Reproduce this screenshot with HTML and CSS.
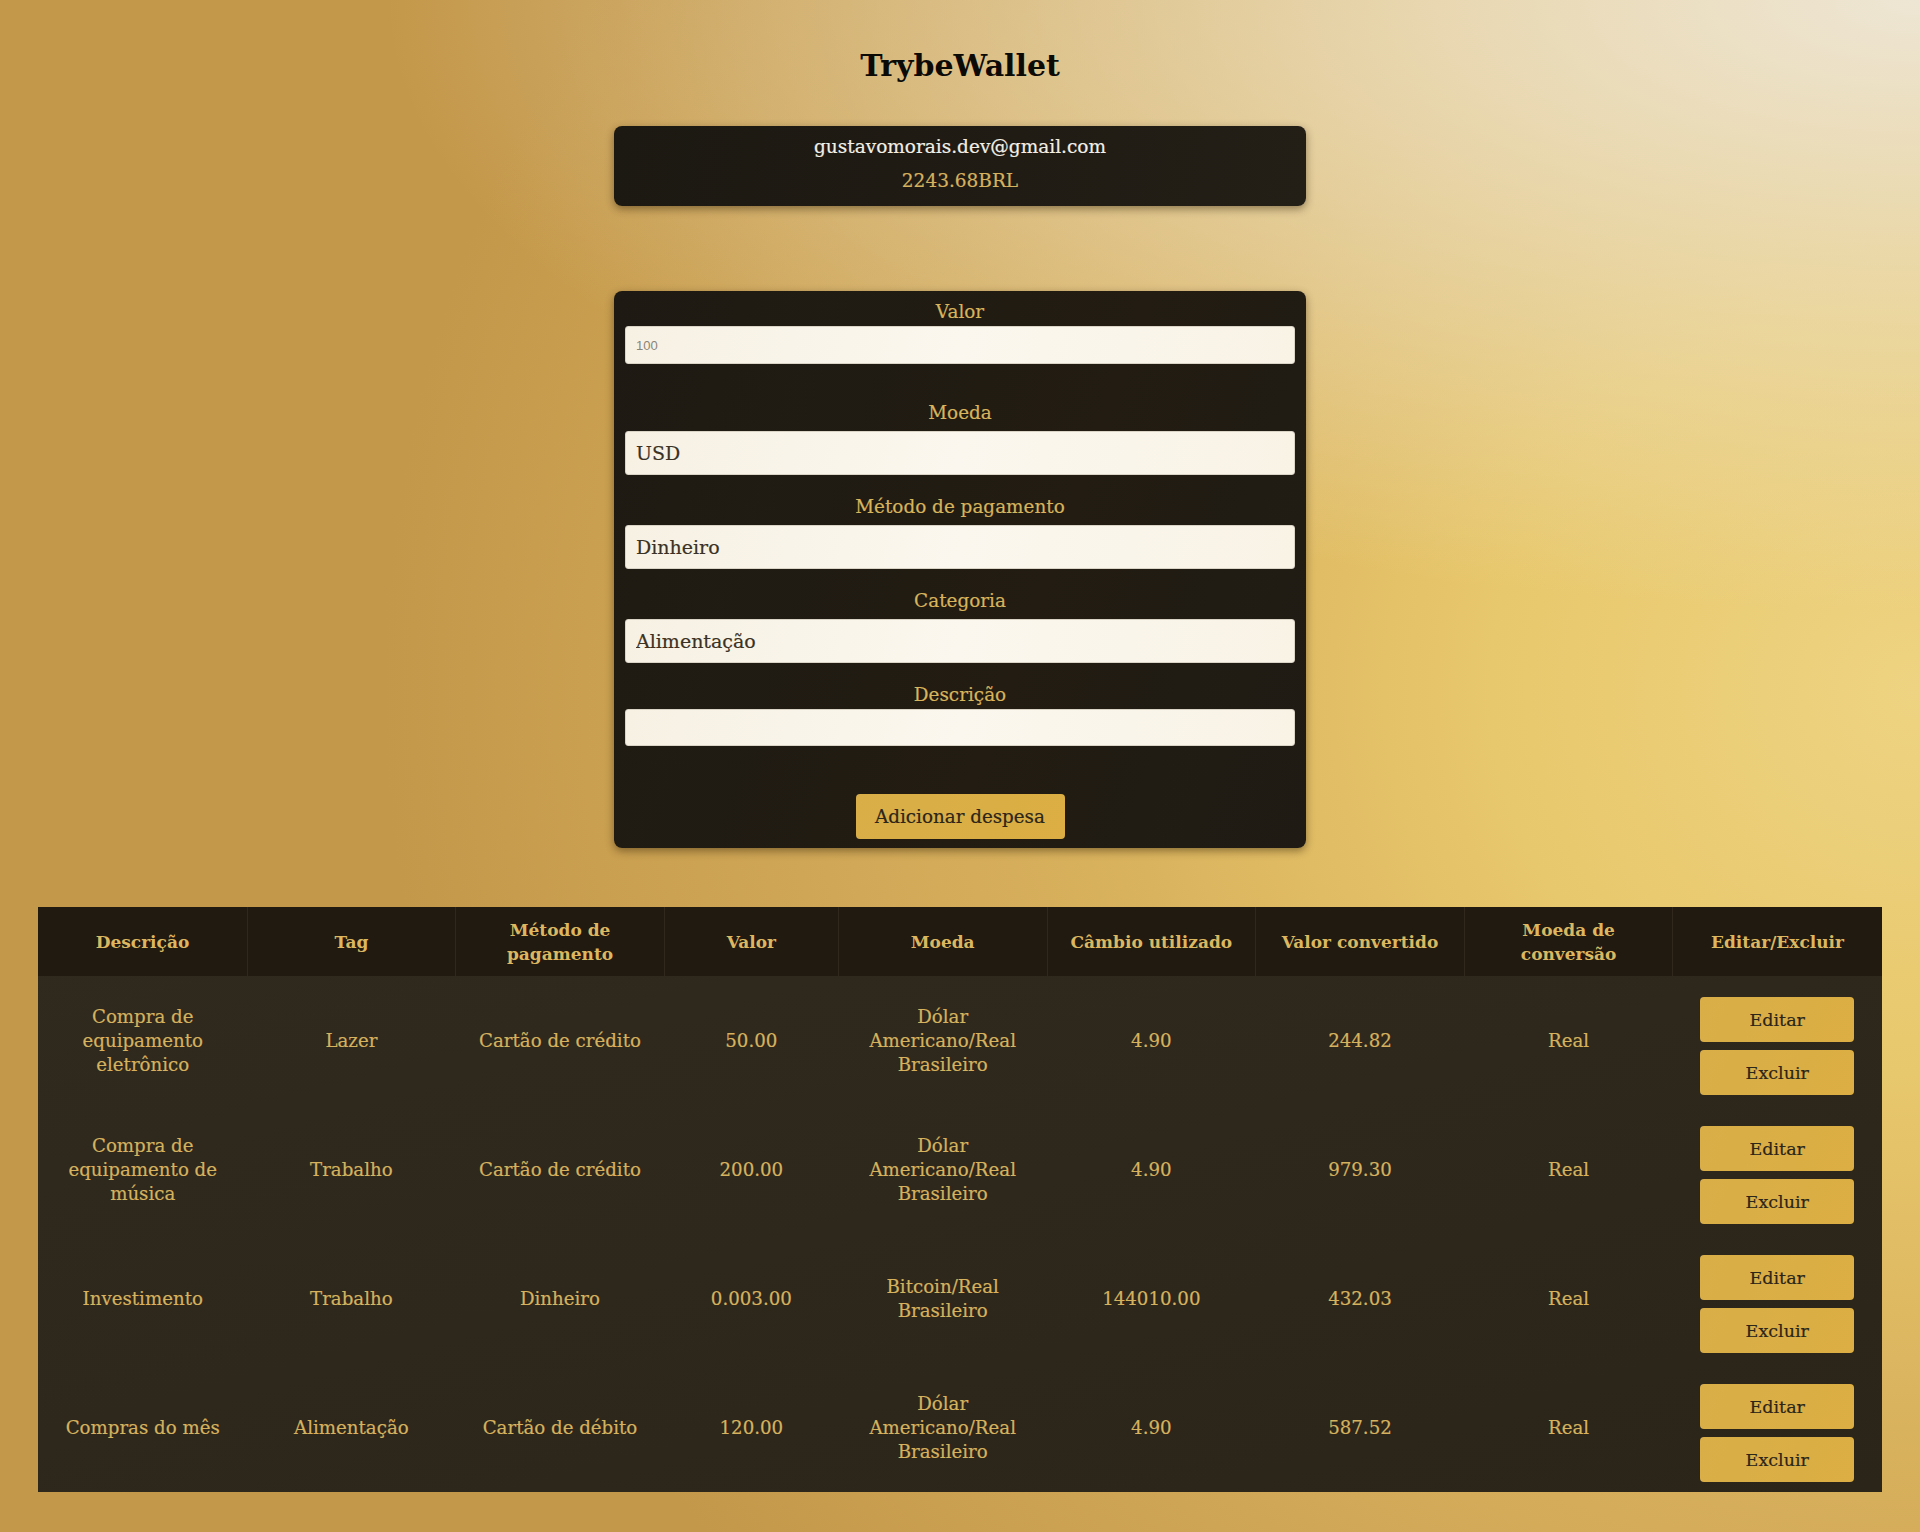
FILE: index.html
```html
<!DOCTYPE html>
<html lang="pt-BR">
<head>
<meta charset="utf-8">
<title>TrybeWallet</title>
<link rel="stylesheet" href="styles.css">
</head>
<body>
<div class="page">
  <h1 class="title">TrybeWallet</h1>
  <header class="user-card">
    <p class="email">gustavomorais.dev@gmail.com</p>
    <p class="balance">2243.68BRL</p>
  </header>

  <form class="expense-form">
    <div class="field field-valor">
      <label class="field-label" for="valor">Valor</label>
      <input class="text-input" id="valor" type="text" placeholder="100">
    </div>
    <div class="field">
      <label class="field-label" for="moeda">Moeda</label>
      <select class="select-input" id="moeda"><option>USD</option></select>
    </div>
    <div class="field">
      <label class="field-label" for="metodo">Método de pagamento</label>
      <select class="select-input" id="metodo"><option>Dinheiro</option></select>
    </div>
    <div class="field">
      <label class="field-label" for="categoria">Categoria</label>
      <select class="select-input" id="categoria"><option>Alimentação</option></select>
    </div>
    <div class="field field-desc">
      <label class="field-label" for="descricao">Descrição</label>
      <input class="text-input" id="descricao" type="text">
    </div>
    <div class="form-actions">
      <button class="add-btn" type="button">Adicionar despesa</button>
    </div>
  </form>

  <table class="expenses">
    <colgroup>
      <col class="col-std"><col class="col-std"><col class="col-std"><col class="col-valor"><col class="col-std"><col class="col-std"><col class="col-std"><col class="col-std"><col class="col-std">
    </colgroup>
    <thead>
      <tr>
        <th>Descrição</th>
        <th>Tag</th>
        <th>Método de pagamento</th>
        <th>Valor</th>
        <th>Moeda</th>
        <th>Câmbio utilizado</th>
        <th>Valor convertido</th>
        <th>Moeda de conversão</th>
        <th>Editar/Excluir</th>
      </tr>
    </thead>
    <tbody>
      <tr>
        <td>Compra de equipamento eletrônico</td>
        <td>Lazer</td>
        <td>Cartão de crédito</td>
        <td>50.00</td>
        <td>Dólar Americano/Real Brasileiro</td>
        <td>4.90</td>
        <td>244.82</td>
        <td>Real</td>
        <td class="actions"><button class="row-btn" type="button">Editar</button><button class="row-btn" type="button">Excluir</button></td>
      </tr>
      <tr>
        <td>Compra de equipamento de música</td>
        <td>Trabalho</td>
        <td>Cartão de crédito</td>
        <td>200.00</td>
        <td>Dólar Americano/Real Brasileiro</td>
        <td>4.90</td>
        <td>979.30</td>
        <td>Real</td>
        <td class="actions"><button class="row-btn" type="button">Editar</button><button class="row-btn" type="button">Excluir</button></td>
      </tr>
      <tr>
        <td>Investimento</td>
        <td>Trabalho</td>
        <td>Dinheiro</td>
        <td>0.003.00</td>
        <td>Bitcoin/Real Brasileiro</td>
        <td>144010.00</td>
        <td>432.03</td>
        <td>Real</td>
        <td class="actions"><button class="row-btn" type="button">Editar</button><button class="row-btn" type="button">Excluir</button></td>
      </tr>
      <tr>
        <td>Compras do mês</td>
        <td>Alimentação</td>
        <td>Cartão de débito</td>
        <td>120.00</td>
        <td>Dólar Americano/Real Brasileiro</td>
        <td>4.90</td>
        <td>587.52</td>
        <td>Real</td>
        <td class="actions"><button class="row-btn" type="button">Editar</button><button class="row-btn" type="button">Excluir</button></td>
      </tr>
    </tbody>
  </table>
</div>
</body>
</html>
```

FILE: styles.css
```css
html {
  min-height: 100%;
  background:
    radial-gradient(ellipse 80% 40% at 100% 0%, rgba(238, 230, 212, 1) 0%, rgba(237, 226, 200, 0.8) 30%, rgba(237, 226, 200, 0) 100%),
    radial-gradient(ellipse 80% 90% at 100% 45%, #eed382 0%, #e8c86c 28%, #dab35e 52%, #cfa656 74%, #c4984a 100%);
  background-color: #c4984a;
}

body {
  margin: 0;
  min-height: 1532px;
  font-family: "DejaVu Serif", "Liberation Serif", serif;
  color: #d8b45c;
}

.page {
  display: flex;
  flex-direction: column;
  align-items: center;
  padding-bottom: 40px;
}

.title {
  margin: 44px 0 0;
  font-size: 30px;
  line-height: 44px;
  font-weight: bold;
  color: #0c0a06;
}

.user-card {
  margin-top: 38px;
  width: 692px;
  box-sizing: border-box;
  padding: 9px 0 13px;
  display: flex;
  flex-direction: column;
  gap: 10px;
  background: linear-gradient(100deg, #1c1912, #231e16);
  border-radius: 8px;
  box-shadow: 0 3px 8px rgba(40, 25, 0, 0.45);
  text-align: center;
}

.user-card p {
  margin: 0;
  line-height: 24px;
  font-size: 18.5px;
  -webkit-text-stroke: 0.2px currentColor;
}

.email {
  color: #f3efe6;
}

.balance {
  color: #d6b15e;
}

.expense-form {
  margin-top: 85px;
  width: 692px;
  box-sizing: border-box;
  padding: 9px 11px 9px;
  display: flex;
  flex-direction: column;
  background: linear-gradient(110deg, #1e1a13, #221c12 60%, #1f1b14);
  border-radius: 8px;
  box-shadow: 0 3px 8px rgba(40, 25, 0, 0.45);
}

.field {
  display: flex;
  flex-direction: column;
  margin-bottom: 20px;
}

.field-valor {
  margin-bottom: 37px;
}

.field-desc {
  margin-bottom: 48px;
}

.field-label {
  display: block;
  text-align: center;
  font-size: 18.4px;
  line-height: 24px;
  color: #d8b45c;
  margin-bottom: 6px;
  -webkit-text-stroke: 0.2px currentColor;
}

.field-valor .field-label,
.field-desc .field-label {
  margin-bottom: 2px;
}

.text-input,
.select-input {
  display: block;
  width: 100%;
  box-sizing: border-box;
  border: 1px solid #d9d4c6;
  border-radius: 3px;
  background: linear-gradient(100deg, #f7f1e4, #fbf7ee 50%, #f9f3e6);
  padding: 0 10px;
  outline: none;
}

.text-input {
  height: 38px;
  font-family: "Liberation Sans", Arial, sans-serif;
  font-size: 13px;
  color: #333;
}

.field-desc .text-input {
  height: 37px;
}

.text-input::placeholder {
  color: #8a8578;
}

.select-input {
  height: 44px;
  -webkit-appearance: none;
  appearance: none;
  font-family: "DejaVu Serif", "Liberation Serif", serif;
  font-size: 19px;
  color: #3a3224;
  -webkit-text-stroke: 0.2px currentColor;
}

.form-actions {
  display: flex;
  justify-content: center;
}

.add-btn {
  width: 209px;
  height: 45px;
  border: none;
  border-radius: 4px;
  background: linear-gradient(110deg, #d9ae48, #dcae43);
  font-family: "DejaVu Serif", "Liberation Serif", serif;
  font-size: 18.3px;
  color: #2b251a;
  padding: 0;
  -webkit-text-stroke: 0.2px currentColor;
}

.expenses {
  margin-top: 59px;
  width: 96%;
  table-layout: fixed;
  border-collapse: collapse;
  background: linear-gradient(165deg, #2f291e 0%, #2d271c 50%, #2a2419 100%);
  text-align: center;
}

.col-std {
  width: 208.6px;
}

.col-valor {
  width: 174px;
}

.expenses th {
  background: #201a10;
  height: 69px;
  padding: 0 14px;
  font-size: 17px;
  line-height: 24px;
  font-weight: bold;
  color: #dcb760;
  border-right: 1px solid #30281a;
}

.expenses th:last-child {
  border-right: none;
}

.expenses td {
  padding: 10px 14px;
  font-size: 18.2px;
  line-height: 24px;
  color: #d6b25e;
  vertical-align: middle;
  -webkit-text-stroke: 0.2px currentColor;
}

.expenses td.actions {
  padding: 21px 10px 10px;
}

.row-btn {
  display: block;
  width: 154px;
  height: 45px;
  margin: 0 auto;
  border: none;
  border-radius: 4px;
  background: linear-gradient(110deg, #d9ae48, #dcae43);
  font-family: "DejaVu Serif", "Liberation Serif", serif;
  font-size: 17.5px;
  color: #2b251a;
  padding: 0;
  -webkit-text-stroke: 0.2px currentColor;
}

.row-btn + .row-btn {
  margin-top: 8px;
}
```
